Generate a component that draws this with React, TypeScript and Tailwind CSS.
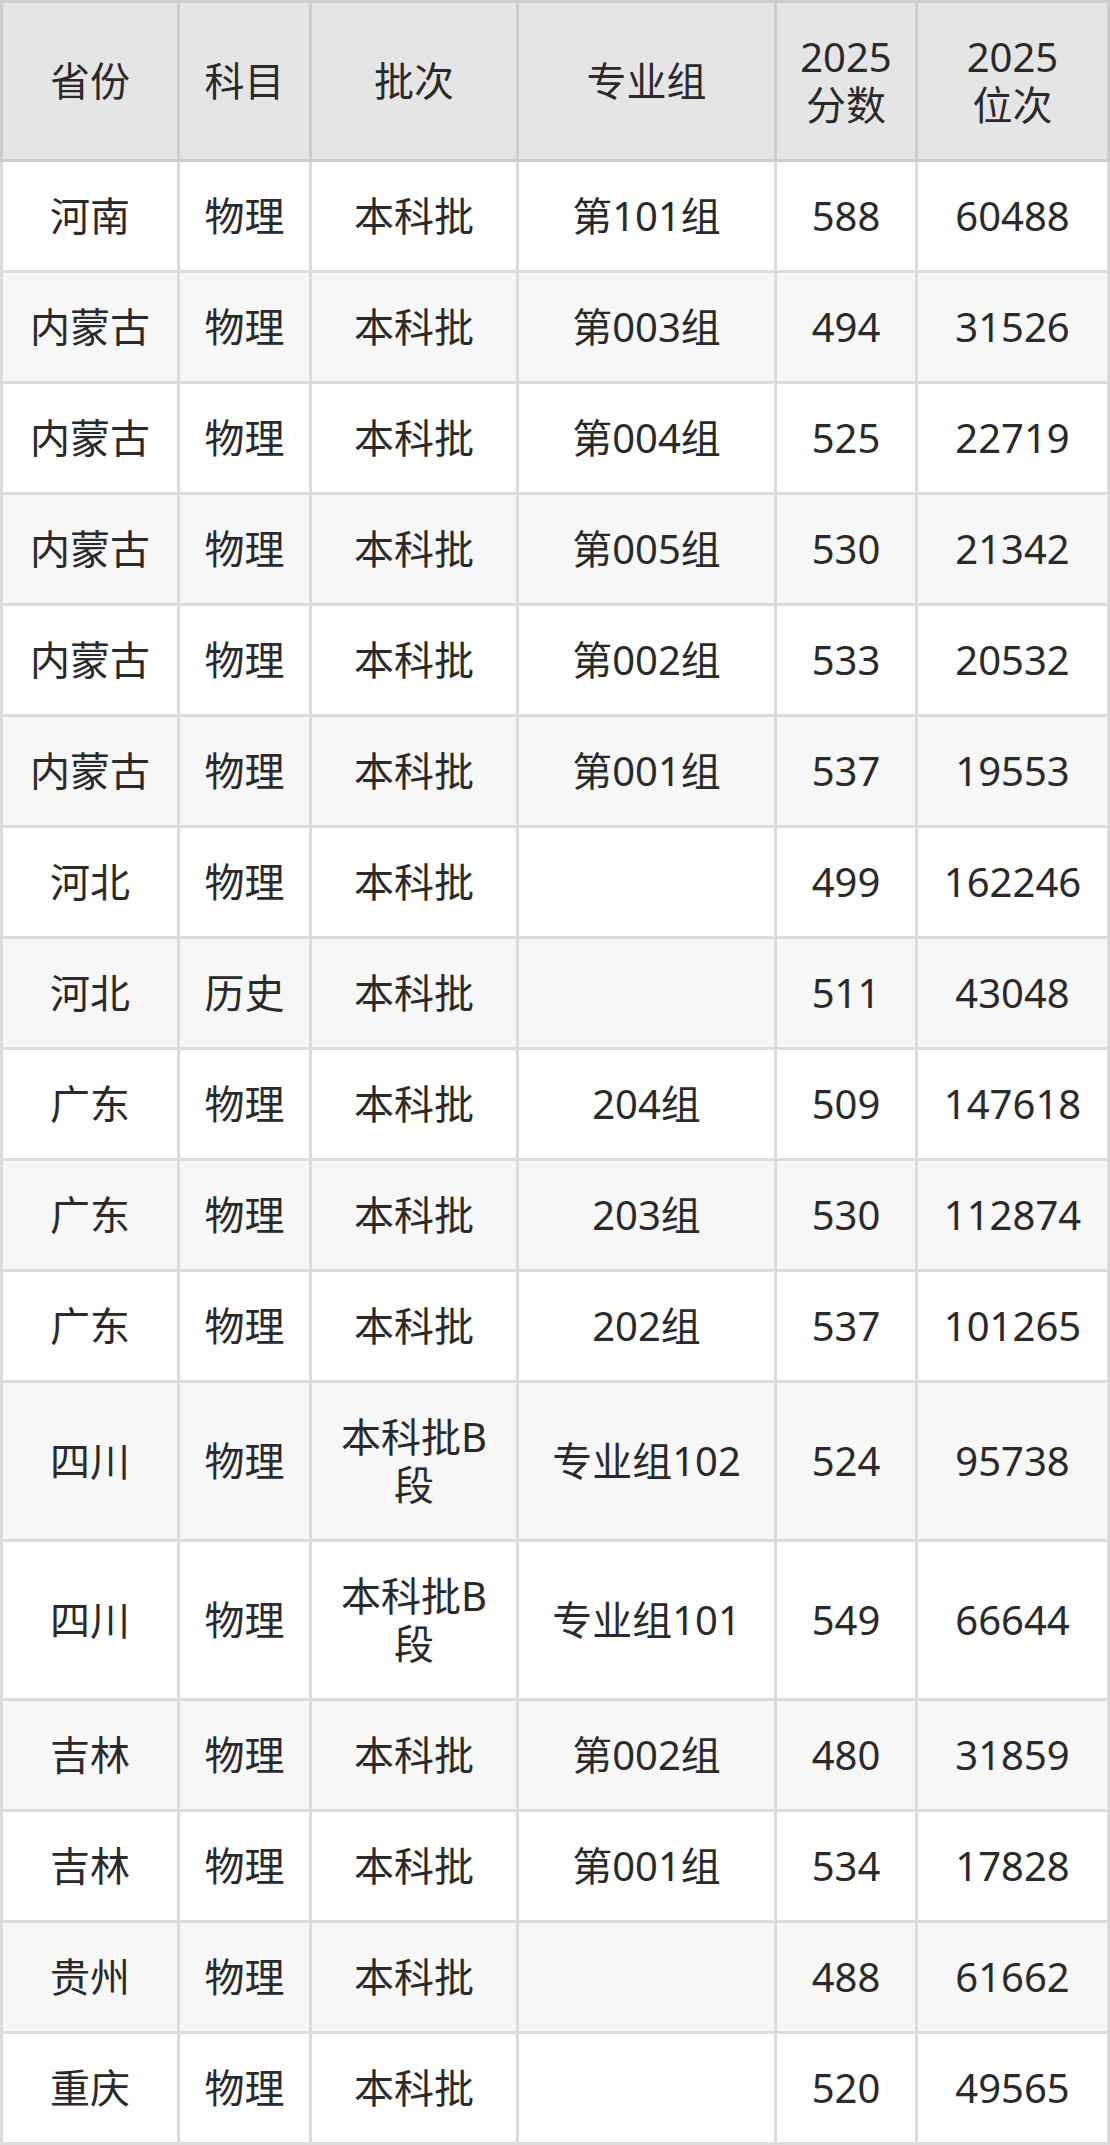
import React from "react";

const header = ["省份", "科目", "批次", "专业组", "2025|分数", "2025|位次"];

const rows: string[][] = [
  ["河南", "物理", "本科批", "第101组", "588", "60488"],
  ["内蒙古", "物理", "本科批", "第003组", "494", "31526"],
  ["内蒙古", "物理", "本科批", "第004组", "525", "22719"],
  ["内蒙古", "物理", "本科批", "第005组", "530", "21342"],
  ["内蒙古", "物理", "本科批", "第002组", "533", "20532"],
  ["内蒙古", "物理", "本科批", "第001组", "537", "19553"],
  ["河北", "物理", "本科批", "", "499", "162246"],
  ["河北", "历史", "本科批", "", "511", "43048"],
  ["广东", "物理", "本科批", "204组", "509", "147618"],
  ["广东", "物理", "本科批", "203组", "530", "112874"],
  ["广东", "物理", "本科批", "202组", "537", "101265"],
  ["四川", "物理", "本科批B段", "专业组102", "524", "95738"],
  ["四川", "物理", "本科批B段", "专业组101", "549", "66644"],
  ["吉林", "物理", "本科批", "第002组", "480", "31859"],
  ["吉林", "物理", "本科批", "第001组", "534", "17828"],
  ["贵州", "物理", "本科批", "", "488", "61662"],
  ["重庆", "物理", "本科批", "", "520", "49565"],
];

export default function App() {
  return (
    <div
      className="w-[1110px] bg-white text-[#2a2a2a]"
      style={{ fontFamily: '"Noto Sans", "Noto Sans CJK SC", sans-serif' }}
    >
      <div className="grid grid-cols-[180px_132px_207px_258px_141px_192px] text-[40px] leading-[48px]">
        {header.map((h, i) => (
          <div
            key={"h" + i}
            className={
              "flex items-center justify-center text-center px-[12px] py-[30px] bg-[#e5e5e5] border-t-[3px] border-r-[3px] border-b-[3px] border-[#cdcdcd] " +
              (i === 0 ? "border-l-[3px]" : "")
            }
          >
            {h.includes("|") ? (
              <span>
                {h.split("|")[0]}
                <br />
                {h.split("|")[1]}
              </span>
            ) : (
              h
            )}
          </div>
        ))}
        {rows.map((r, ri) =>
          r.map((c, ci) => (
            <div
              key={ri + "-" + ci}
              className={
                "flex items-center justify-center text-center px-[12px] py-[30px] border-r-[3px] border-b-[3px] border-[#dcdcdc] " +
                (ri % 2 === 1 ? "bg-[#f7f7f7] " : "bg-white ") +
                (ci === 0 ? "border-l-[3px]" : "")
              }
            >
              {c === "本科批B段" ? (
                <span>
                  本科批B
                  <br />段
                </span>
              ) : (
                <span className="min-h-[48px]">{c}</span>
              )}
            </div>
          ))
        )}
      </div>
    </div>
  );
}
